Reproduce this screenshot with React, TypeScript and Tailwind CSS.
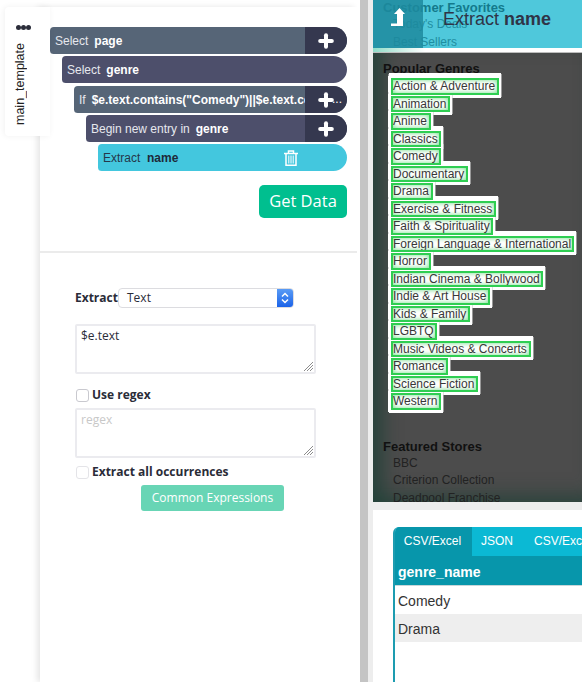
import React from 'react';
import { Plus } from 'lucide-react';

const sans = "font-['Liberation_Sans',Arial,sans-serif]";
const open = "font-['Open_Sans',sans-serif]";

const genres = [
  { name: 'Action & Adventure', width: 'w-[108px]' },
  { name: 'Animation', width: 'w-[59px]' },
  { name: 'Anime', width: 'w-[40px]' },
  { name: 'Classics', width: 'w-[50px]' },
  { name: 'Comedy', width: 'w-[50px]' },
  { name: 'Documentary', width: 'w-[77px]' },
  { name: 'Drama', width: 'w-[42px]' },
  { name: 'Exercise & Fitness', width: 'w-[105px]' },
  { name: 'Faith & Spirituality', width: 'w-[102px]' },
  { name: 'Foreign Language & International', width: 'w-[183px]' },
  { name: 'Horror', width: 'w-[40px]' },
  { name: 'Indian Cinema & Bollywood', width: 'w-[152px]' },
  { name: 'Indie & Art House', width: 'w-[99px]' },
  { name: 'Kids & Family', width: 'w-[79px]' },
  { name: 'LGBTQ', width: 'w-[46px]' },
  { name: 'Music Videos & Concerts', width: 'w-[140px]' },
  { name: 'Romance', width: 'w-[57px]' },
  { name: 'Science Fiction', width: 'w-[87px]' },
  { name: 'Western', width: 'w-[50px]' },
];

const Row = ({
  indent,
  color,
  label,
  value,
  plus,
  more,
}: {
  indent: string;
  color: string;
  label: string;
  value: string;
  plus?: boolean;
  more?: boolean;
}) => (
  <div
    className={`${indent} ${color} h-[27px] flex items-center overflow-hidden rounded-l-[4px] rounded-r-[14px] text-[12px] text-[#e6e8ee]`}
  >
    <div className="flex-1 min-w-0 pl-[5px] whitespace-nowrap overflow-hidden">
      {label}
      <b className="font-bold text-white ml-[6px]">{value}</b>
    </div>
    {plus && (
      <div className="relative w-[42px] h-full bg-[#35384f] flex items-center justify-center shrink-0">
        <Plus size={20} strokeWidth={4} className="text-white" absoluteStrokeWidth />
        {more && <span className="absolute left-[27px] top-[6px] text-[12px] leading-[14px] text-white">...</span>}
      </div>
    )}
  </div>
);

const Resize = () => (
  <svg className="absolute right-[1px] bottom-[1px]" width="10" height="10" viewBox="0 0 10 10">
    <path d="M1 10L10 1M4 10L10 4M7 10L10 7" stroke="#8c8c8c" strokeWidth="1" />
  </svg>
);

export default function App() {
  return (
    <div className={`w-[582px] h-[682px] flex overflow-hidden bg-white ${sans}`}>
      {/* template tab rail */}
      <div className="w-[40px] shrink-0 relative z-10 pt-[7px]">
        <div className="ml-[5px] w-[45px] h-[129px] bg-white rounded-l-[4px] shadow-[-1px_0_6px_rgba(0,0,0,0.06)] flex flex-col items-center pt-[18px]">
          <div className="flex mr-[8px]">
            <span className="w-[5px] h-[5px] rounded-full bg-[#2b2d3a]" />
            <span className="w-[5px] h-[5px] rounded-full bg-[#2b2d3a]" />
            <span className="w-[5px] h-[5px] rounded-full bg-[#2b2d3a]" />
          </div>
          <div className="mt-[13px] mr-[15px] text-[12.5px] leading-[15px] text-[#222] [writing-mode:vertical-rl] rotate-180">
            main_template
          </div>
        </div>
      </div>

      {/* editor panel */}
      <div className="w-[317px] shrink-0 flex flex-col bg-white mt-[7px] shadow-[-3px_0_6px_rgba(0,0,0,0.1)]">
        <div className="h-[246px] shrink-0 border-b-2 border-[#ebebeb] pt-[20px] pl-[10px] pr-[10px]">
          <div className="flex flex-col gap-[2px]">
            <Row indent="ml-0" color="bg-[#566577]" label="Select" value="page" plus />
            <Row indent="ml-[12px]" color="bg-[#4d4f6b]" label="Select" value="genre" />
            <Row indent="ml-[24px] mt-[1px]" color="bg-[#566577]" label="If" value={'$e.text.contains("Comedy")||$e.text.contains("Drama")'} plus more />
            <Row indent="ml-[36px]" color="bg-[#4d4f6b]" label="Begin new entry in" value="genre" plus />
            <div className="ml-[48px] h-[27px] bg-[#43c7de] rounded-l-[4px] rounded-r-[14px] flex items-center pl-[5px] text-[12px] text-[#25384a]">
              <span className="w-[38px]">Extract</span>
              <b className="font-bold ml-[6px] w-[31px] text-[#1e2a3a]">name</b>
              <svg className="ml-[106px]" width="14" height="16" viewBox="0 0 14 16" fill="none" stroke="white">
                <path d="M0 3.5H14M4.5 3V1H9.5V3" strokeWidth="1.5" />
                <path d="M2 4V15.25H12V4" strokeWidth="1.5" />
                <path d="M4.8 5.5V13.5M7 5.5V13.5M9.2 5.5V13.5" strokeWidth="1" />
              </svg>
            </div>
          </div>
          <div className="flex justify-end mt-[14px]">
            <button className={`w-[88px] h-[33px] rounded-[5px] bg-[#00bf8f] text-white text-[16.5px] ${open}`}>Get Data</button>
          </div>
        </div>

        <div className={`pl-[35px] pt-[35px] ${open} text-[12px] text-[#2a2c38]`}>
          <div className="flex items-center h-[20px]">
            <span className="font-bold w-[43px] shrink-0">Extract</span>
            <div className="w-[176px] h-[20px] bg-white border border-[#dcdce0] rounded-[4px] flex items-center pl-[8px] relative overflow-hidden">
              Text
              <div className="absolute right-0 top-0 bottom-0 w-[16px] bg-gradient-to-b from-[#5a9bf5] to-[#1a62e8] flex items-center justify-center">
                <svg width="10" height="14" viewBox="0 0 10 14" fill="none" stroke="white" strokeWidth="1.5">
                  <path d="M2 5.5L5 2.5L8 5.5M2 8.5L5 11.5L8 8.5" />
                </svg>
              </div>
            </div>
          </div>
          <div className="relative w-[241px] h-[50px] mt-[16px] border-2 border-[#ebebef] rounded-[2px] px-[4px] pt-[1px] leading-[18px]">
            $e.text
            <Resize />
          </div>
          <label className="flex items-center h-[14px] mt-[14px] font-bold">
            <span className="w-[13px] h-[13px] ml-[1px] border border-[#c9c9cf] rounded-[3px] mr-[3px]" />
            Use regex
          </label>
          <div className="relative w-[241px] h-[50px] mt-[6px] border-2 border-[#ebebef] rounded-[2px] px-[4px] pt-[1px] leading-[18px] text-[#c8c8c8]">
            regex
            <Resize />
          </div>
          <label className="flex items-center h-[14px] mt-[7px] font-bold">
            <span className="w-[13px] h-[13px] ml-[1px] border border-[#e4e4e8] rounded-[3px] mr-[3px]" />
            Extract all occurrences
          </label>
          <button className="block ml-[66px] mt-[6px] w-[143px] h-[26px] rounded-[3px] bg-[#68d5b5] text-white text-[12px]">
            Common Expressions
          </button>
        </div>
      </div>

      {/* splitter */}
      <div className="w-[3px] shrink-0 bg-white" />
      <div className="w-[8px] shrink-0 bg-[#c4c4c4]" />
      <div className="w-[5px] shrink-0 bg-[#ededed]" />

      {/* preview column */}
      <div className="w-[209px] shrink-0 flex flex-col overflow-hidden">
        <div className="relative h-[48px] shrink-0 bg-[#4fc8db] overflow-hidden">
          <div className="text-[12px] text-[#1f8ea1] pl-[20px] leading-[17.5px]">
            <div className="font-bold text-[13px] leading-[16px] -ml-[10px] text-[#137a8c]">Customer Favorites</div>
            <div>Today's Deals</div>
            <div>Best Sellers</div>
          </div>
          <div className="absolute left-0 top-0 bottom-0 w-[50px] bg-[#1d8a9d]/85">
            <svg className="absolute left-[18px] top-[8px]" width="14" height="19" viewBox="0 0 14 19" fill="white">
              <path d="M8.5 0L14 6H12V18H0V15.5H6V6H3Z" />
            </svg>
          </div>
          <div className="absolute left-[70px] top-[7px] text-[18px] leading-[24px] text-[#2f3447] whitespace-nowrap">
            Extract <b className="font-bold">name</b>
          </div>
        </div>
        <div className="h-[5px] shrink-0 bg-gradient-to-r from-[#8fdcc8] to-white to-[25%] border-b border-[#bdbdbd]" />

        <div className="h-[449px] shrink-0 bg-[#4c4c4c] shadow-[inset_20px_0_18px_-10px_rgba(30,65,55,0.75),inset_0_-20px_18px_-12px_rgba(30,65,55,0.6)] pl-[10px] pt-[8px] overflow-hidden text-[#111]">
          <div className="font-bold text-[13px] leading-[16px]">Popular Genres</div>
          <ul className="mt-[1px] ml-[8px] flex flex-col gap-[1px]">
            {genres.map((g) => (
              <li
                key={g.name}
                className={`${g.width} h-[16.5px] shadow-[0_-3px_0_2px_#fff,0_1px_0_2px_#fff,-1px_0_0_2px_#fff,0_-1px_0_3px_rgba(205,205,205,0.6)]`}
              >
                <div className="relative z-[1] h-full bg-white text-[12px] leading-[12.5px] text-[#383838] whitespace-nowrap border-2 border-[#2fce52] shadow-[inset_0_0_5px_rgba(46,204,80,0.7)] overflow-hidden">
                  {g.name}
                </div>
              </li>
            ))}
          </ul>
          <div className="font-bold text-[13px] leading-[16px] mt-[29px]">Featured Stores</div>
          <div className="text-[12px] text-[#222] leading-[17.5px] ml-[10px]">
            <div>BBC</div>
            <div>Criterion Collection</div>
            <div>Deadpool Franchise</div>
          </div>
        </div>

        <div className="h-[8px] shrink-0 bg-[#ededed]" />

        {/* result table */}
        <div className="flex-1 pl-[20px] pt-[17px] bg-white">
          <div className="h-full w-[260px] border-l-2 border-[#1d9cb0] rounded-tl-[6px] overflow-hidden">
            <div className="h-[29px] flex bg-[#0bb9d4] text-[12px] text-white leading-[29px]">
              <div className="w-[77px] pr-[2px] bg-[#0796ab] text-center">CSV/Excel</div>
              <div className="pl-[9px] pr-[21px]">JSON</div>
              <div className="whitespace-nowrap">CSV/Excel</div>
            </div>
            <div className="h-[30px] bg-[#0796ab] text-white font-bold text-[14px] leading-[32px] pl-[3px] border-b border-[#c9d6d9]">genre_name</div>
            <div className="h-[28px] bg-white text-[14px] text-[#333] leading-[30px] pl-[3px]">Comedy</div>
            <div className="h-[28px] bg-[#eeeeee] text-[14px] text-[#333] leading-[30px] pl-[3px]">Drama</div>
          </div>
        </div>
      </div>
    </div>
  );
}
